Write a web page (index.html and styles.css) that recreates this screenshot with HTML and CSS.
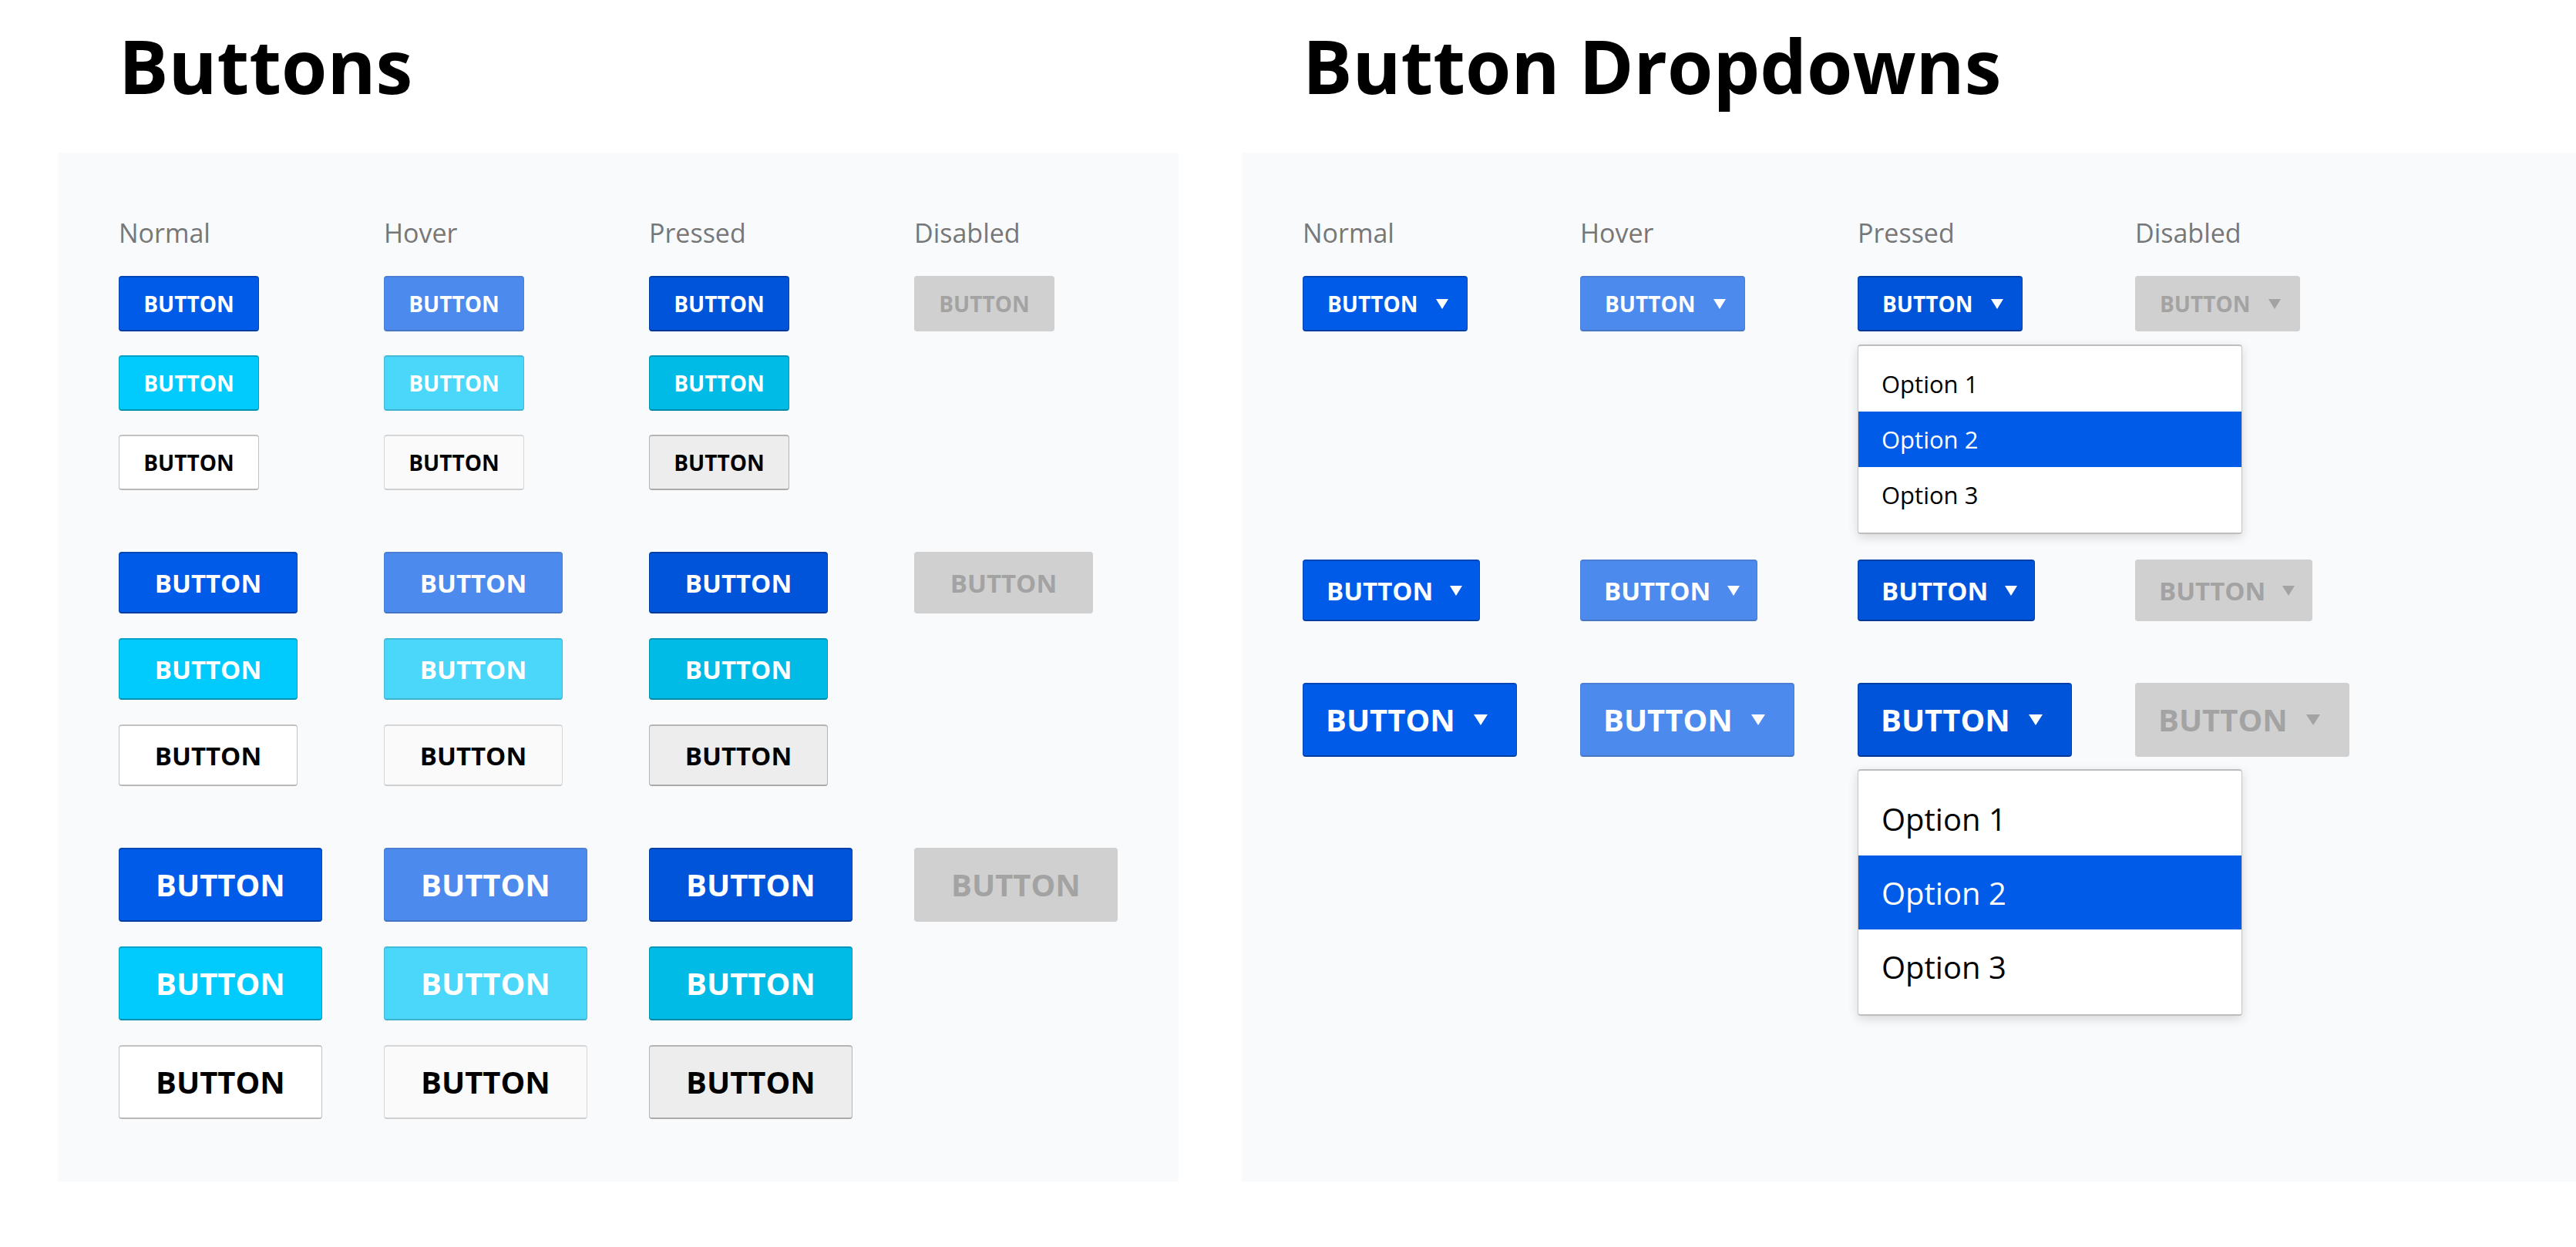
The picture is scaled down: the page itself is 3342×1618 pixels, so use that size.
FILE: index.html
```html
<!DOCTYPE html>
<html lang="en">
<head>
<meta charset="utf-8">
<title>Buttons</title>
<link rel="stylesheet" href="styles.css">
</head>
<body>
<main class="page">
  <section class="section section--buttons">
    <h1 class="title">Buttons</h1>
    <div class="panel">
      <div class="states states--buttons">
        <span class="state">Normal</span>
        <span class="state">Hover</span>
        <span class="state">Pressed</span>
        <span class="state">Disabled</span>
      </div>

      <div class="group group--sm">
        <button class="btn btn--sm btn--primary">BUTTON</button>
        <button class="btn btn--sm btn--primary-hover">BUTTON</button>
        <button class="btn btn--sm btn--primary-pressed">BUTTON</button>
        <button class="btn btn--sm btn--disabled">BUTTON</button>
        <button class="btn btn--sm btn--cyan">BUTTON</button>
        <button class="btn btn--sm btn--cyan-hover">BUTTON</button>
        <button class="btn btn--sm btn--cyan-pressed">BUTTON</button>
        <span class="empty"></span>
        <button class="btn btn--sm btn--white">BUTTON</button>
        <button class="btn btn--sm btn--white-hover">BUTTON</button>
        <button class="btn btn--sm btn--white-pressed">BUTTON</button>
        <span class="empty"></span>
      </div>

      <div class="group group--md">
        <button class="btn btn--md btn--primary">BUTTON</button>
        <button class="btn btn--md btn--primary-hover">BUTTON</button>
        <button class="btn btn--md btn--primary-pressed">BUTTON</button>
        <button class="btn btn--md btn--disabled">BUTTON</button>
        <button class="btn btn--md btn--cyan">BUTTON</button>
        <button class="btn btn--md btn--cyan-hover">BUTTON</button>
        <button class="btn btn--md btn--cyan-pressed">BUTTON</button>
        <span class="empty"></span>
        <button class="btn btn--md btn--white">BUTTON</button>
        <button class="btn btn--md btn--white-hover">BUTTON</button>
        <button class="btn btn--md btn--white-pressed">BUTTON</button>
        <span class="empty"></span>
      </div>

      <div class="group group--lg">
        <button class="btn btn--lg btn--primary">BUTTON</button>
        <button class="btn btn--lg btn--primary-hover">BUTTON</button>
        <button class="btn btn--lg btn--primary-pressed">BUTTON</button>
        <button class="btn btn--lg btn--disabled">BUTTON</button>
        <button class="btn btn--lg btn--cyan">BUTTON</button>
        <button class="btn btn--lg btn--cyan-hover">BUTTON</button>
        <button class="btn btn--lg btn--cyan-pressed">BUTTON</button>
        <span class="empty"></span>
        <button class="btn btn--lg btn--white">BUTTON</button>
        <button class="btn btn--lg btn--white-hover">BUTTON</button>
        <button class="btn btn--lg btn--white-pressed">BUTTON</button>
        <span class="empty"></span>
      </div>
    </div>
  </section>

  <section class="section section--dropdowns">
    <h1 class="title">Button Dropdowns</h1>
    <div class="panel">
      <div class="states states--dropdowns">
        <span class="state">Normal</span>
        <span class="state">Hover</span>
        <span class="state">Pressed</span>
        <span class="state">Disabled</span>
      </div>

      <div class="dd-row dd-row--sm">
        <div class="dd-cell"><button class="dd dd--sm btn--primary"><span>BUTTON</span><i class="caret"></i></button></div>
        <div class="dd-cell"><button class="dd dd--sm btn--primary-hover"><span>BUTTON</span><i class="caret"></i></button></div>
        <div class="dd-cell">
          <button class="dd dd--sm btn--primary-pressed"><span>BUTTON</span><i class="caret"></i></button>
          <ul class="menu menu--sm">
            <li class="menu-item">Option 1</li>
            <li class="menu-item menu-item--active">Option 2</li>
            <li class="menu-item">Option 3</li>
          </ul>
        </div>
        <div class="dd-cell"><button class="dd dd--sm btn--disabled"><span>BUTTON</span><i class="caret"></i></button></div>
      </div>

      <div class="dd-row dd-row--md">
        <div class="dd-cell"><button class="dd dd--md btn--primary"><span>BUTTON</span><i class="caret"></i></button></div>
        <div class="dd-cell"><button class="dd dd--md btn--primary-hover"><span>BUTTON</span><i class="caret"></i></button></div>
        <div class="dd-cell"><button class="dd dd--md btn--primary-pressed"><span>BUTTON</span><i class="caret"></i></button></div>
        <div class="dd-cell"><button class="dd dd--md btn--disabled"><span>BUTTON</span><i class="caret"></i></button></div>
      </div>

      <div class="dd-row dd-row--lg">
        <div class="dd-cell"><button class="dd dd--lg btn--primary"><span>BUTTON</span><i class="caret"></i></button></div>
        <div class="dd-cell"><button class="dd dd--lg btn--primary-hover"><span>BUTTON</span><i class="caret"></i></button></div>
        <div class="dd-cell">
          <button class="dd dd--lg btn--primary-pressed"><span>BUTTON</span><i class="caret"></i></button>
          <ul class="menu menu--lg">
            <li class="menu-item">Option 1</li>
            <li class="menu-item menu-item--active">Option 2</li>
            <li class="menu-item">Option 3</li>
          </ul>
        </div>
        <div class="dd-cell"><button class="dd dd--lg btn--disabled"><span>BUTTON</span><i class="caret"></i></button></div>
      </div>
    </div>
  </section>
</main>
</body>
</html>
```

FILE: styles.css
```css
* { box-sizing: border-box; }

html, body {
  margin: 0;
  padding: 0;
  background: #ffffff;
  font-family: "Open Sans", "Noto Sans", "Liberation Sans", sans-serif;
  color: #000;
}

.page {
  display: flex;
  gap: 82px;
  padding: 37px 0 0 75px;
}

.section--buttons { width: 1454px; flex: none; }
.section--dropdowns { flex: 1; min-width: 0; }

.title {
  margin: 0 0 65px 79px;
  font-size: 96px;
  line-height: 96px;
  font-weight: 700;
  letter-spacing: 0;
  white-space: nowrap;
}

.panel {
  background: #f9fafc;
  height: 1335px;
  padding: 84px 0 0 79px;
}

.states {
  display: grid;
  height: 40px;
}
.states--buttons { grid-template-columns: repeat(4, 344px); }
.states--dropdowns { grid-template-columns: repeat(4, 360px); }

.state {
  font-size: 34px;
  line-height: 40px;
  color: #777777;
  font-weight: 400;
}

/* ---------- Plain buttons ---------- */
.group {
  display: grid;
  grid-template-columns: repeat(4, 344px);
  row-gap: 32px;
  justify-items: start;
}
.group--sm { margin-top: 36px; row-gap: 31px; }
.group--md { margin-top: 80px; }
.group--lg { margin-top: 80px; }

.btn, .dd {
  display: flex;
  align-items: center;
  margin: 0;
  font-family: "Open Sans", "Noto Sans", "Liberation Sans", sans-serif;
  font-weight: 700;
  line-height: 1;
  color: #fff;
  border-style: solid;
  border-width: 2px 1px 2px 1px;
  border-radius: 4px;
  cursor: pointer;
  white-space: nowrap;
}

.btn { justify-content: center; padding: 0; }

.btn--sm { width: 182px; height: 72px; font-size: 28px; }
.btn--md { width: 232px; height: 80px; font-size: 33px; }
.btn--lg { width: 264px; height: 96px; font-size: 40px; }

.btn--primary { background: #005be9; border-color: #0046b5; border-bottom-color: #003f9f; }
.btn--primary-hover { background: #4d8aee; border-color: #4a7fd4; border-bottom-color: #4476c4; }
.btn--primary-pressed { background: #0054da; border-color: #0040a6; border-bottom-color: #003a96; }
.btn--disabled { background: #d0d0d0; border-color: #d0d0d0; color: #a3a3a3; }

.btn--cyan { background: #00cbfc; border-color: #009fc4; border-bottom-color: #0091b3; }
.btn--cyan-hover { background: #4bd7fa; border-color: #43b9d9; border-bottom-color: #3fb0cd; }
.btn--cyan-pressed { background: #00bbe6; border-color: #0094b8; border-bottom-color: #0088a9; }

.btn--white { background: #ffffff; border-color: #c2c2c2; border-bottom-color: #b8b8b8; color: #000; }
.btn--white-hover { background: #fafafa; border-color: #d6d6d6; border-bottom-color: #cfcfcf; color: #000; }
.btn--white-pressed { background: #ededed; border-color: #b5b5b5; border-bottom-color: #aaaaaa; color: #000; }

/* ---------- Dropdown buttons ---------- */
.dd-row {
  display: grid;
  grid-template-columns: repeat(4, 360px);
  align-items: start;
}
.dd-row--sm { margin-top: 36px; }
.dd-row--md { margin-top: 33px; }
.dd-row--lg { margin-top: 80px; }

.dd-cell { display: flex; flex-direction: column; align-items: flex-start; }

.dd { justify-content: flex-start; }
.dd--sm { width: 214px; height: 72px; font-size: 28px; padding: 0 24px 0 31px; }
.dd--md { width: 230px; height: 80px; font-size: 33px; padding: 0 22px 0 30px; }
.dd--lg { width: 278px; height: 96px; font-size: 40px; padding: 0 37px 0 29px; }

.caret {
  display: block;
  margin-left: auto;
  width: 0;
  height: 0;
  border-left: 8px solid transparent;
  border-right: 8px solid transparent;
  border-top: 13px solid currentColor;
}
.dd--lg .caret {
  border-left-width: 9px;
  border-right-width: 9px;
  border-top-width: 14px;
}

/* ---------- Menus ---------- */
.menu {
  list-style: none;
  margin: 0;
  width: 499px;
  background: #ffffff;
  border: 1px solid #c6c6c6;
  border-top: 2px solid #bdbdbd;
  border-bottom: 2px solid #bdbdbd;
  border-radius: 4px;
  box-shadow: 0 4px 14px rgba(0, 0, 0, 0.14);
  font-weight: 400;
  color: #000;
}
.menu--sm { margin-top: 17px; padding: 13px 0; }
.menu--lg { margin-top: 16px; padding: 14px 0; }

.menu-item {
  display: flex;
  align-items: center;
  padding-left: 30px;
  white-space: nowrap;
}
.menu--sm .menu-item { height: 72px; font-size: 31px; }
.menu--lg .menu-item { height: 96px; font-size: 40px; }

.menu-item--active { background: #005be9; color: #ffffff; }

.empty { display: block; }
```
